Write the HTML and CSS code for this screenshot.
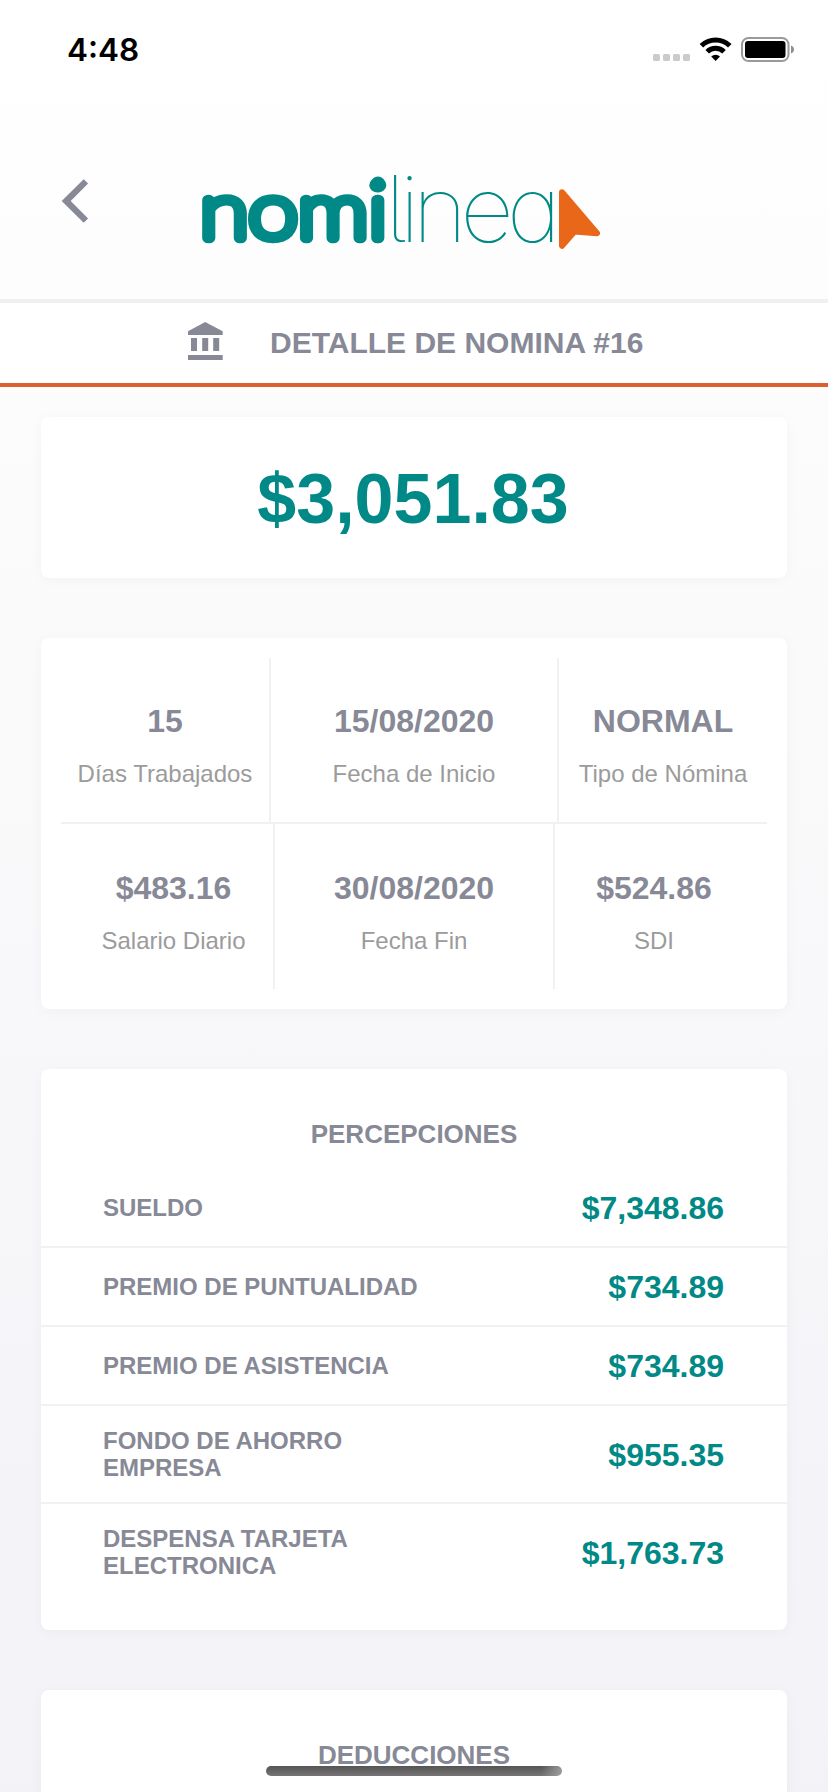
FILE: index.html
```html
<!DOCTYPE html>
<html lang="es">
<head>
<meta charset="utf-8">
<title>Detalle de nomina</title>
<link rel="stylesheet" href="styles.css">
</head>
<body>
<div class="screen">
  <div class="status">
    <span class="time">4:48</span>
    <svg class="status-icons" width="144" height="30" viewBox="652 34 144 30">
      <g fill="#cbcbcb">
        <rect x="653" y="54" width="7" height="7" rx="1.500"/><rect x="663" y="54" width="7" height="7" rx="1.500"/>
        <rect x="673" y="54" width="7" height="7" rx="1.500"/><rect x="683" y="54" width="7" height="7" rx="1.500"/>
      </g>
      <g fill="none" stroke="#000" stroke-width="5">
        <path d="M701.4 45.800a20.200 20.200 0 0 1 28.400 0"/>
        <path d="M707.2 51.700a12 12 0 0 1 16.800 0"/>
      </g>
      <path d="M715.6 61l-4.400-4.400a6.400 6.400 0 0 1 8.800 0z"/>
      <rect x="742" y="38" width="46.500" height="23" rx="6.500" fill="none" stroke="#9a9a9a" stroke-width="2"/>
      <rect x="745" y="41" width="40.500" height="17" rx="3"/>
      <path d="M791 45.500q3 1.200 3 4t-3 4z" fill="#8f8f8f"/>
    </svg>
  </div>
  <header class="header">
    <svg class="back" width="28" height="44" viewBox="61 178.700 28 44" fill="#878996"><path d="M61.700 200.700L83.700 178.900l4.400 4.400-17.400 17.400 17.400 17.400-4.400 4.300z"/></svg>
    <svg class="logo" width="410" height="150" viewBox="195 130 410 150">
      <text class="logo-bold" x="200" y="238" textLength="187" lengthAdjust="spacingAndGlyphs">nomi</text>
      <circle cx="378" cy="183.500" r="7" fill="#008986"/>
      <text class="logo-thin" x="385" y="242" textLength="169" lengthAdjust="spacingAndGlyphs">linea</text>
      <path d="M562 192.300L597 233.300 574.500 231.500 562 245.700z" fill="#e96718" stroke="#e96718" stroke-width="6" stroke-linejoin="round"/>
    </svg>
  </header>
  <div class="titlebar">
    <svg class="bank" width="35" height="38" viewBox="188 322 35 38" fill="#878996"><path d="M205.200 322l17.500 9.200v3.800H188v-3.800zM191 338h6v13h-6zM202.200 338h6v13h-6zM213.200 338h6v13h-6zM188 355h34.700v5H188z"/></svg>
    <h1>DETALLE DE NOMINA #16</h1>
  </div>
  <main class="content">
    <section class="card total">$3,051.83</section>
    <section class="card summary">
      <div class="stats stats-top">
        <div class="stat"><b>15</b><span>Días Trabajados</span></div>
        <div class="stat"><b>15/08/2020</b><span>Fecha de Inicio</span></div>
        <div class="stat"><b>NORMAL</b><span>Tipo de Nómina</span></div>
      </div>
      <div class="stats stats-bottom">
        <div class="stat"><b>$483.16</b><span>Salario Diario</span></div>
        <div class="stat"><b>30/08/2020</b><span>Fecha Fin</span></div>
        <div class="stat"><b>$524.86</b><span>SDI</span></div>
      </div>
    </section>
    <section class="card list">
      <h2>PERCEPCIONES</h2>
      <div class="row"><span>SUELDO</span><b>$7,348.86</b></div>
      <div class="row"><span>PREMIO DE PUNTUALIDAD</span><b>$734.89</b></div>
      <div class="row"><span>PREMIO DE ASISTENCIA</span><b>$734.89</b></div>
      <div class="row"><span>FONDO DE AHORRO<br>EMPRESA</span><b>$955.35</b></div>
      <div class="row"><span>DESPENSA TARJETA<br>ELECTRONICA</span><b>$1,763.73</b></div>
    </section>
    <section class="card list">
      <h2>DEDUCCIONES</h2>
    </section>
  </main>
  <div class="home"></div>
</div>
</body>
</html>
```
FILE: styles.css
```css
* { box-sizing: border-box; }
body { margin: 0; font-family: "Liberation Sans", Arial, sans-serif; color: #878996; }
.screen {
  position: relative;
  width: 828px;
  height: 1792px;
  overflow: hidden;
  background: linear-gradient(#fff 0, #fdfdfd 300px, #fbfbfb 500px, #f8f8fa 1000px, #f3f3f8 1650px, #f2f2f7 1792px);
}
.status { height: 88px; padding: 34px 32px 0 67px; display: flex; justify-content: space-between; align-items: flex-start; }
.time { font: 600 31.5px/31px Inter, sans-serif; color: #000; }
.header { height: 215px; border-bottom: 4px solid #f0f0f0; display: flex; align-items: flex-start; padding-left: 61px; }
.back { margin-top: 91px; }
.logo { margin: 42px 0 0 106px; }
.logo-bold { font: 100 78px Lato, sans-serif; fill: #008986; stroke: #008986; stroke-width: 10.5px; stroke-linejoin: round; }
.logo-thin { font: 100 92px Inter, sans-serif; letter-spacing: -7px; font-feature-settings: "cv11", "cv05"; fill: #008986; }
.titlebar { height: 84px; background: #fff; border-bottom: 4px solid #dc602f; display: flex; align-items: center; padding-left: 188px; gap: 47px; }
.bank { margin-bottom: 4px; }
h1 { margin: 0; font-size: 30px; line-height: 34px; font-weight: 700; }
.content { padding: 30px 41px 0; display: flex; flex-direction: column; gap: 60px; }
.card { background: #fff; border-radius: 8px; box-shadow: 0 2px 14px rgba(0, 0, 0, .035); }
.total { height: 161px; padding: 2px 2px 0 0; display: flex; align-items: center; justify-content: center; color: #008986; font-size: 70px; font-weight: 700; }
.summary { height: 371px; padding: 20px; }
.stats { display: grid; text-align: center; }
.stats-top { height: 166px; grid-template-columns: 210px 288px 208px; border-bottom: 2px solid #f1f1f1; }
.stats-bottom { height: 165px; grid-template-columns: 214px 280px 212px; }
.stat { padding-top: 45px; display: flex; flex-direction: column; gap: 21px; border-right: 2px solid #f1f1f1; }
.stat:last-child { border-right: 0; }
.stats-bottom .stat { padding-top: 46px; }
.stats-bottom .stat:first-child { padding-left: 13px; }
.stats-bottom .stat:last-child { padding-right: 14px; }
.stat b { font-size: 32px; line-height: 36px; }
.stat span { font-size: 24px; line-height: 27px; color: #9b9b9b; }
.list { padding-bottom: 30px; }
h2 { margin: 0; height: 100px; padding-top: 50px; font-size: 26px; line-height: 30px; font-weight: 700; text-align: center; }
.row { display: flex; justify-content: space-between; align-items: center; padding: 21px 63px 21px 62px; border-bottom: 2px solid #f1f1f1; }
.row:last-child { border-bottom: 0; }
.row span { font-size: 24px; line-height: 27px; font-weight: 700; }
.row b { font-size: 32px; line-height: 34px; padding-top: 1px; color: #008986; }
.home { position: absolute; left: 266px; top: 1766px; width: 296px; height: 10px; border-radius: 5px; background: linear-gradient(90deg, rgba(160,160,160,0) 93%, rgba(170,170,170,.8)), linear-gradient(#555, #777475); }
```
